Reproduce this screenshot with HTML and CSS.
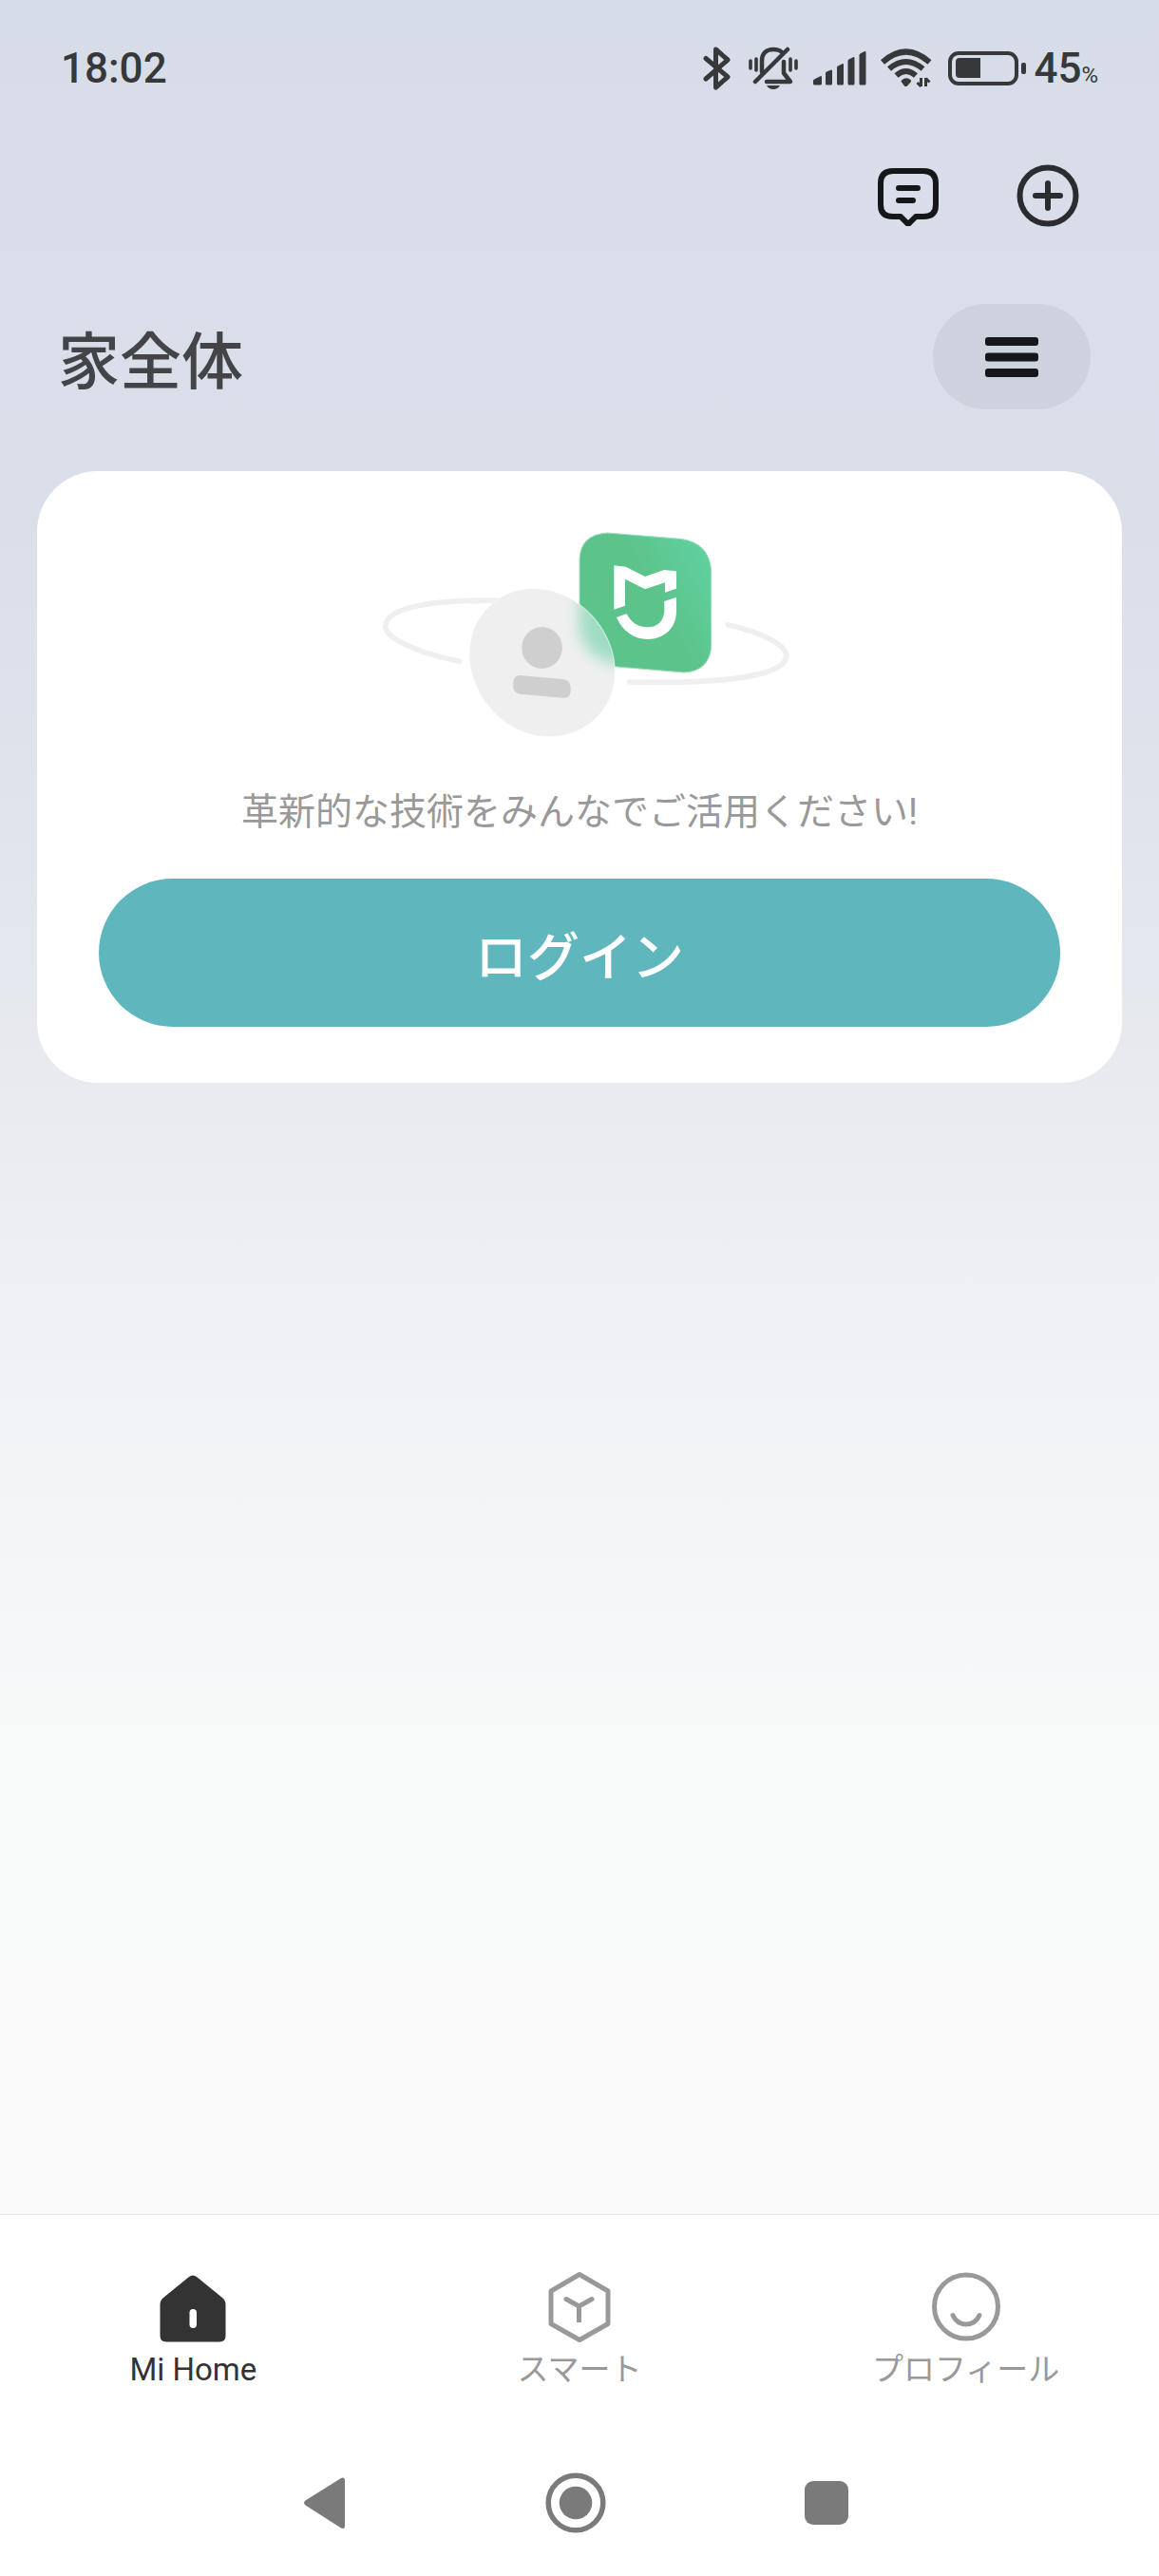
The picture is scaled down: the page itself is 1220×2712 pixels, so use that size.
FILE: index.html
```html
<!DOCTYPE html>
<html lang="ja">
  <head>
    <meta charset="UTF-8" />
    <meta name="viewport" content="width=device-width, initial-scale=1" />
    <title>Mi Home</title>
    <link rel="stylesheet" href="styles.css">
  </head>
  <body>
    <!-- Status Bar -->
    <div class="status-bar">
      <span class="clock">18:02</span>
      <div class="status-icons">
        <svg width="30" height="46" viewBox="0 0 30 46" fill="none" stroke="#36383a" stroke-width="5" stroke-linecap="round" stroke-linejoin="round">
          <path d="M3 12.500 26 32 13.500 43V3L26 14 3 34" />
        </svg>
        <svg class="bell" width="52" height="46" viewBox="0 0 52 46" fill="none" stroke="#36383a" stroke-width="4" stroke-linecap="round">
          <path d="M2 15v8M8 13v12M44 13v12M50 15v8" stroke-width="3.600" />
          <path d="M14 27V15C14 7 19 3 26 3c4 0 7 1 9 3" stroke-width="4.500" />
          <path d="M7 37 41 3" stroke-width="4.500" />
          <path d="M37 16v12l7 9H19" stroke-width="4.500" stroke-linejoin="round" />
          <path d="M19 41h14c-1.500 2.500-4 4-7 4s-5.500-1.500-7-4z" fill="#36383a" stroke="none" />
        </svg>
        <svg class="signal" width="56" height="36" viewBox="0 0 56 36" fill="#36383a">
          <path d="M0 33v-2q0-1 1-1.500L8 26q1 0 1 1v7q0 1.500-1.500 1.500h-6Q0 35.500 0 34zM13 23q0-1 1-1.500l5-2q1 0 1 1V34q0 1.500-1.500 1.500h-4Q13 35.500 13 34zM25 17q0-1 1-1.500l5-2.500q1 0 1 1v20q0 1.500-1.500 1.500h-4Q25 35.500 25 34zM36.500 10q0-1 1-1.500l5-2.500q1 0 1 1v27q0 1.500-1.500 1.500h-4q-1.500 0-1.500-1.500zM48.500 4q0-1 1-1.500L54 0q1.500 0 1.500 1v33q0 1.500-1.500 1.500h-4q-1.500 0-1.500-1.500z" />
        </svg>
        <svg class="wifi" width="54" height="42" viewBox="0 0 54 42" fill="none" stroke="#36383a" stroke-width="6">
          <path d="M2 14.500Q26.500-7.500 51.500 14.500M9 21.500q17.500-15 35.500 0M16.500 28.500q10-9 20.500 0" />
          <path d="M22 33.500q5-4.500 10 0 .5 1-.5 2l-3.500 4q-1.500 1-3 0l-3-4q-1-1 0-2z" fill="#36383a" stroke="none" />
          <path d="M42.500 31v9M47.500 40v-9M42.500 40l-4-4M47.500 31.500l4 4" stroke-width="3" />
        </svg>
        <svg class="battery" width="82" height="36" viewBox="0 0 82 36">
          <rect x="2" y="2" width="70" height="32" rx="9" fill="none" stroke="#36383a" stroke-width="4" />
          <path d="M34 7v21H12q-4 0-4-4V11q0-4 4-4z" fill="#36383a" />
          <rect x="77" y="12" width="5" height="12" rx="2" fill="#36383a" />
        </svg>
        <span class="battery-level">45<small>%</small></span>
      </div>
    </div>

    <!-- Toolbar -->
    <header>
      <div class="toolbar">
        <button type="button" class="icon-button" aria-label="メッセージ">
          <svg width="64" height="64" viewBox="0 0 64 64" fill="none" stroke="#151719" stroke-width="6" stroke-linecap="round" stroke-linejoin="round">
            <path d="M16 6h32q13 0 13 13v23q0 12-13 12H40l-8 8-8-8h-8Q3 54 3 42V19Q3 6 16 6z" />
            <path d="M22 24h20M22 37h15" />
          </svg>
        </button>
        <button type="button" class="icon-button" aria-label="追加">
          <svg width="66" height="66" viewBox="0 0 66 66" fill="none" stroke="#2b2c30" stroke-width="6" stroke-linecap="round">
            <circle cx="33" cy="33" r="29.500" />
            <path d="M33 20v26M20 33h26" />
          </svg>
        </button>
      </div>
      <div class="title-row">
        <h1>家全体</h1>
        <button type="button" class="menu-button" aria-label="メニュー">
          <svg width="56" height="42" viewBox="0 0 56 42" fill="#151719">
            <rect width="56" height="9" rx="3" />
            <rect y="16.500" width="56" height="9" rx="3" />
            <rect y="33" width="56" height="9" rx="3" />
          </svg>
        </button>
      </div>
    </header>

    <!-- Login Card -->
    <main>
      <section class="login-card">
        <svg class="illustration" width="460" height="270" viewBox="0 0 1380 810">
          <defs>
            <linearGradient id="tile" x1="0.300" y1="0.600" x2="1" y2="0.200">
              <stop offset="0.400" stop-color="#5cc48b" />
              <stop offset="1" stop-color="#60d0a0" />
            </linearGradient>
            <clipPath id="face">
              <path id="disc" d="M545 269C430 269 342 360 342 478c0 130 115 259 250 259 118 0 210-86 210-205C802 400 685 269 545 269z" />
            </clipPath>
            <filter id="soft" x="-50%" y="-50%" width="200%" height="200%">
              <feGaussianBlur stdDeviation="24" />
            </filter>
          </defs>
          <path d="M445 307C240 303 77 325 77 388c0 40 105 84 234 111M1158 383c105 24 185 62 185 99 0 60-190 90-495 82" fill="none" stroke="#efefef" stroke-width="17" stroke-linecap="round" />
          <path d="M690 175Q694 98 778 93L1010 112Q1100 125 1106 212V455Q1098 530 1020 534L690 506z" fill="url(#tile)" stroke="#a5dfc0" stroke-width="3" />
          <path d="M799 196 836 200 897 231 957 210 996 214V269L960 281V250L897 271 834 239V323L799 335z" fill="#fff" />
          <path d="M996 296V340C996 395 957 429 905 429 862 429 825 402 807 360L839 348C852 375 875 391 904 391 937 391 958 370 958 335V309z" fill="#fff" />
          <use href="#disc" fill="#efefef" />
          <g clip-path="url(#face)">
            <path d="M690 240H880V505H790Q705 480 690 400z" fill="#9fdcc3" filter="url(#soft)" />
          </g>
          <use href="#disc" fill="none" stroke="#fff" stroke-opacity="0.400" stroke-width="4" />
          <ellipse cx="571.500" cy="456" rx="64" ry="66" fill="#cfcfcf" />
          <path d="M502 543 638 555Q662 558 662 582V592Q662 616 638 614L502 602Q481 599 481 580V565Q482 544 502 543z" fill="#cfcfcf" />
        </svg>
        <p>革新的な技術をみんなでご活用ください!</p>
        <button type="button" class="login-button">ログイン</button>
      </section>
    </main>

    <!-- Tab Bar -->
    <nav class="tab-bar">
      <ul>
        <li>
          <a href="#" class="active" aria-current="page">
            <svg width="76" height="76" viewBox="0 0 76 76">
              <path d="M34 5q4-3 8 0l27 22q3.500 3 3.500 7v33q0 6.500-6.500 6.500H10q-6.500 0-6.500-6.500V34q0-4 3.500-7z" fill="#333" />
              <rect x="34.500" y="39" width="7.500" height="20" rx="3.700" fill="#fff" />
            </svg>
            Mi Home
          </a>
        </li>
        <li>
          <a href="#">
            <svg width="76" height="76" viewBox="0 0 76 76" fill="none" stroke="#999" stroke-width="5" stroke-linejoin="round">
              <path d="M38 2.500 68 20v34.500L38 71.500 8 54.500V20z" />
              <path d="M24 28.500 37.500 36 51 28.500" stroke-linecap="round" />
              <path d="M37.500 36v17" />
            </svg>
            スマート
          </a>
        </li>
        <li>
          <a href="#">
            <svg width="76" height="76" viewBox="0 0 76 76" fill="none" stroke="#999" stroke-width="5" stroke-linecap="round">
              <circle cx="38" cy="36.500" r="33.500" />
              <path d="M24 45.500c5.500 12.500 22.500 12.500 28 0" />
            </svg>
            プロフィール
          </a>
        </li>
      </ul>
    </nav>

    <!-- System Navigation -->
    <div class="system-nav">
      <button type="button" aria-label="戻る">
        <svg width="64" height="64" viewBox="0 0 64 64" fill="#7a7a7a">
          <path d="M11.500 29.500 49 6q4-2 4 3v47q0 4-4 2.500L11.500 34.500q-3-2.500 0-5z" />
        </svg>
      </button>
      <button type="button" aria-label="ホーム">
        <svg width="64" height="64" viewBox="0 0 64 64">
          <circle cx="32" cy="32" r="28.800" fill="none" stroke="#7a7a7a" stroke-width="5.500" />
          <circle cx="32" cy="32" r="17.300" fill="#7a7a7a" />
        </svg>
      </button>
      <button type="button" aria-label="履歴">
        <svg width="64" height="64" viewBox="0 0 64 64" fill="#7a7a7a">
          <rect x="9" y="9" width="46" height="46" rx="9" />
        </svg>
      </button>
    </div>
  </body>
</html>
```

FILE: styles.css
```css
/* Basic Reset */
* {
  margin: 0;
  padding: 0;
  box-sizing: border-box;
}

/* Body & Background */
body {
  display: flex;
  flex-direction: column;
  min-height: 100vh;
  font-family: Roboto, "Noto Sans CJK JP", sans-serif;
  background: linear-gradient(#d7dde8 0%, #dadfea 20%, #e0e4ec 32%, #e9ebf0 43%, #f2f3f6 55%, #f8f9f9 68%, #fafafa 86%);
  color: #333;
}

svg {
  display: block;
  flex: none;
}

button {
  border: none;
  background: none;
  font-family: inherit;
  cursor: pointer;
}

/* Status Bar */
.status-bar {
  display: flex;
  justify-content: space-between;
  align-items: center;
  height: 144px;
  padding: 0 64px;
  font-size: 44px;
  font-weight: 500;
  color: #36383a;
}

.status-icons {
  display: flex;
  align-items: center;
}

.bell {
  margin-left: 18px;
}

.signal {
  margin-left: 16px;
}

.wifi {
  margin-left: 15px;
}

.battery {
  margin-left: 17px;
}

.battery-level {
  margin-left: 8px;
}

.battery-level small {
  font-size: 24px;
  font-weight: 400;
}

/* Toolbar */
.toolbar {
  display: flex;
  justify-content: flex-end;
  gap: 82px;
  padding: 29px 84px 0;
}

.icon-button {
  display: flex;
  align-items: center;
}

.title-row {
  display: flex;
  justify-content: space-between;
  align-items: center;
  padding: 81px 72px 65px 61px;
}

h1 {
  padding-top: 12px;
  font-size: 65px;
  font-weight: 500;
  line-height: 96px;
  color: #424447;
}

.menu-button {
  display: flex;
  justify-content: center;
  align-items: center;
  width: 166px;
  height: 111px;
  border-radius: 56px;
  background-color: rgba(0, 0, 0, 0.05);
}

/* Login Card */
main {
  flex: 1;
  padding: 0 39px;
}

.login-card {
  display: flex;
  flex-direction: column;
  align-items: center;
  padding: 34px 65px 59px;
  border-radius: 64px;
  background-color: #fff;
}

.login-card p {
  margin: 26px 0 41px;
  font-size: 39px;
  line-height: 58px;
  color: #999;
}

.login-button {
  width: 100%;
  height: 156px;
  border-radius: 78px;
  background-color: #5fb6bd;
  font-size: 55px;
  font-weight: 500;
  color: #fff;
}

/* Tab Bar */
.tab-bar {
  border-top: 1px solid #e5e5e5;
  background-color: #fff;
}

.tab-bar ul {
  display: flex;
  list-style: none;
}

.tab-bar li {
  flex: 1;
}

.tab-bar a {
  display: flex;
  flex-direction: column;
  align-items: center;
  padding: 60px 0;
  font-size: 33px;
  line-height: 54px;
  color: #999;
  text-decoration: none;
}

.tab-bar a.active {
  color: #333;
}

/* System Navigation */
.system-nav {
  display: flex;
  justify-content: center;
  gap: 200px;
  padding: 21px 8px 45px 0;
  background-color: #fff;
}
```
